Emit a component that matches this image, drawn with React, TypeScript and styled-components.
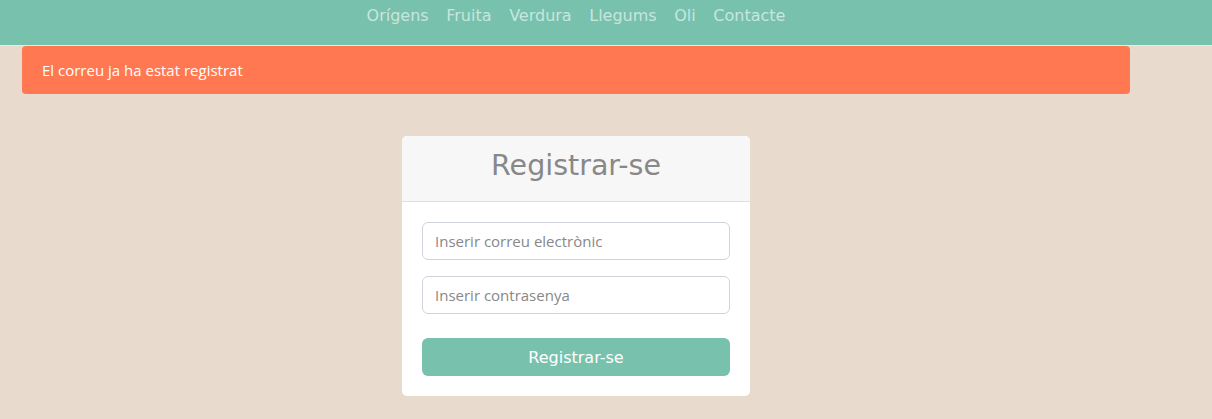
import React from "react";
import styled, { createGlobalStyle } from "styled-components";

const Global = createGlobalStyle`
  html, body { margin: 0; padding: 0; }
  body {
    background: #e8dbce;
    font-family: "Open Sans", "Liberation Sans", sans-serif;
    min-height: 419px;
  }
  * { box-sizing: border-box; }
`;

const NavBar = styled.nav`
  height: 46px;
  background: #78c2ad;
  border-bottom: 1px solid #d9efe8;
  padding: 0 82px 0 22px;
`;

const NavList = styled.ul`
  list-style: none;
  margin: 0;
  padding: 4px 0 0;
  display: flex;
  justify-content: center;
  gap: 17.6px;
`;

const NavItem = styled.li`
  font-family: "DejaVu Sans", sans-serif;
  font-size: 16px;
  line-height: 24px;
  color: rgba(255, 255, 255, 0.6);
`;

const Page = styled.main`
  padding: 0 82px 0 22px;
`;

const Alert = styled.div`
  height: 48px;
  background: #ff7851;
  border-radius: 4px;
  color: #fff;
  font-size: 15px;
  display: flex;
  align-items: center;
  padding: 0 20px;
`;

const Card = styled.section`
  width: 348px;
  margin: 42px auto 0;
  background: #fff;
  border-radius: 5px;
  overflow: hidden;
`;

const CardHeader = styled.header`
  height: 66px;
  background: #f7f7f7;
  border-bottom: 1px solid #dfdfdf;
  display: flex;
  align-items: center;
  justify-content: center;
  padding-bottom: 7px;
`;

const Title = styled.h3`
  margin: 0;
  font-family: "DejaVu Sans", sans-serif;
  font-weight: 400;
  font-size: 28.5px;
  color: #888;
`;

const CardBody = styled.form`
  padding: 20px;
  display: flex;
  flex-direction: column;
`;

const Input = styled.input`
  height: 38px;
  width: 100%;
  border: 1px solid #ced4da;
  border-radius: 6px;
  padding: 0 12px;
  font-family: "Open Sans", sans-serif;
  font-size: 15px;
  color: #555;
  margin-bottom: 16px;
  &::placeholder { color: #888; }
`;

const Button = styled.button`
  margin-top: 8px;
  height: 38px;
  width: 100%;
  border: none;
  border-radius: 6px;
  background: #78c2ad;
  color: #fff;
  font-family: "DejaVu Sans", sans-serif;
  font-size: 16px;
`;

const links = ["Orígens", "Fruita", "Verdura", "Llegums", "Oli", "Contacte"];

export default function App() {
  return (
    <>
      <Global />
      <NavBar>
        <NavList>
          {links.map((l) => (
            <NavItem key={l}>{l}</NavItem>
          ))}
        </NavList>
      </NavBar>
      <Page>
        <Alert>El correu ja ha estat registrat</Alert>
        <Card>
          <CardHeader>
            <Title>Registrar-se</Title>
          </CardHeader>
          <CardBody onSubmit={(e) => e.preventDefault()}>
            <Input type="email" placeholder="Inserir correu electrònic" />
            <Input type="password" placeholder="Inserir contrasenya" />
            <Button type="submit">Registrar-se</Button>
          </CardBody>
        </Card>
      </Page>
    </>
  );
}
